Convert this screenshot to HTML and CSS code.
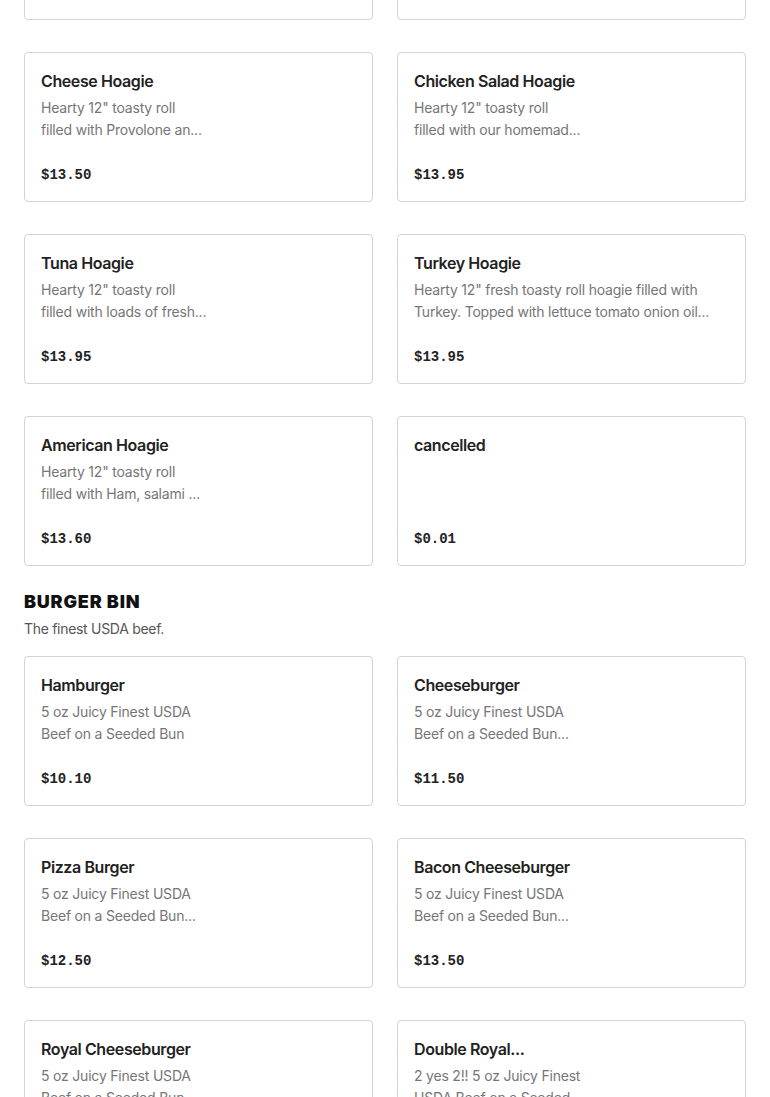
FILE: index.html
```html
<!DOCTYPE html>
<html>
<head>
<meta charset="utf-8">
<link rel="stylesheet" href="styles.css">
</head>
<body>
<main class="menu">
  <section class="section section-scrolled">
    <div class="grid">
      <div class="card"><div class="title">Italian Hoagie</div><div class="desc">Hearty 12" toasty roll<br>filled with Ham, salami...</div><div class="price">$13.95</div></div>
      <div class="card"><div class="title">Steak Hoagie</div><div class="desc">Hearty 12" toasty roll<br>filled with steak...</div><div class="price">$14.50</div></div>
      <div class="card"><div class="title">Cheese Hoagie</div><div class="desc">Hearty 12" toasty roll<br>filled with Provolone an...</div><div class="price">$13.50</div></div>
      <div class="card"><div class="title">Chicken Salad Hoagie</div><div class="desc">Hearty 12" toasty roll<br>filled with our homemad...</div><div class="price">$13.95</div></div>
      <div class="card"><div class="title">Tuna Hoagie</div><div class="desc">Hearty 12" toasty roll<br>filled with loads of fresh...</div><div class="price">$13.95</div></div>
      <div class="card"><div class="title">Turkey Hoagie</div><div class="desc">Hearty 12" fresh toasty roll hoagie filled with<br>Turkey. Topped with lettuce tomato onion oil...</div><div class="price">$13.95</div></div>
      <div class="card"><div class="title">American Hoagie</div><div class="desc">Hearty 12" toasty roll<br>filled with Ham, salami ...</div><div class="price">$13.60</div></div>
      <div class="card"><div class="title">cancelled</div><div class="desc"></div><div class="price">$0.01</div></div>
    </div>
  </section>
  <section class="section">
    <h2 class="section-title">BURGER BIN</h2>
    <p class="section-sub">The finest USDA beef.</p>
    <div class="grid">
      <div class="card"><div class="title">Hamburger</div><div class="desc">5 oz Juicy Finest USDA<br>Beef on a Seeded Bun</div><div class="price">$10.10</div></div>
      <div class="card"><div class="title">Cheeseburger</div><div class="desc">5 oz Juicy Finest USDA<br>Beef on a Seeded Bun...</div><div class="price">$11.50</div></div>
      <div class="card"><div class="title">Pizza Burger</div><div class="desc">5 oz Juicy Finest USDA<br>Beef on a Seeded Bun...</div><div class="price">$12.50</div></div>
      <div class="card"><div class="title">Bacon Cheeseburger</div><div class="desc">5 oz Juicy Finest USDA<br>Beef on a Seeded Bun...</div><div class="price">$13.50</div></div>
      <div class="card"><div class="title">Royal Cheeseburger</div><div class="desc">5 oz Juicy Finest USDA<br>Beef on a Seeded Bun...</div><div class="price">$13.95</div></div>
      <div class="card"><div class="title">Double Royal...</div><div class="desc">2 yes 2!! 5 oz Juicy Finest<br>USDA Beef on a Seeded...</div><div class="price">$17.95</div></div>
    </div>
  </section>
</main>
</body>
</html>
```

FILE: styles.css
```css
* { box-sizing: border-box; }
html, body { margin: 0; padding: 0; background: #fff; }
body {
  font-family: Inter, "Noto Sans", sans-serif;
  color: #1f1f1f;
  overflow: hidden;
}
.menu { padding: 0 24px; }
.section-scrolled { margin-top: -130px; }
.section-title {
  margin: 24px 0 0;
  font-size: 18px;
  line-height: 24px;
  font-weight: 900;
  letter-spacing: 0.8px;
  color: #111;
}
.section-sub {
  margin: 4px 0 0;
  font-size: 14px;
  line-height: 22px;
  letter-spacing: -0.3px;
  color: #555;
}
.section-sub + .grid { margin-top: 16px; }
.grid {
  display: grid;
  grid-template-columns: 1fr 1fr;
  column-gap: 24px;
  row-gap: 32px;
}
.card {
  height: 150px;
  border: 1px solid #d3d3d3;
  border-radius: 4px;
  padding: 16px 16px 15px;
  display: flex;
  flex-direction: column;
}
.title {
  font-size: 16px;
  line-height: 24px;
  font-weight: 600;
  letter-spacing: -0.4px;
  color: #222;
}
.desc {
  margin-top: 4px;
  font-size: 14px;
  line-height: 22px;
  letter-spacing: -0.2px;
  color: #767676;
}
.price {
  margin-top: auto;
  font-family: "Liberation Mono", "DejaVu Sans Mono", monospace;
  font-weight: 700;
  font-size: 14px;
  line-height: 22px;
  color: #222;
}
```
